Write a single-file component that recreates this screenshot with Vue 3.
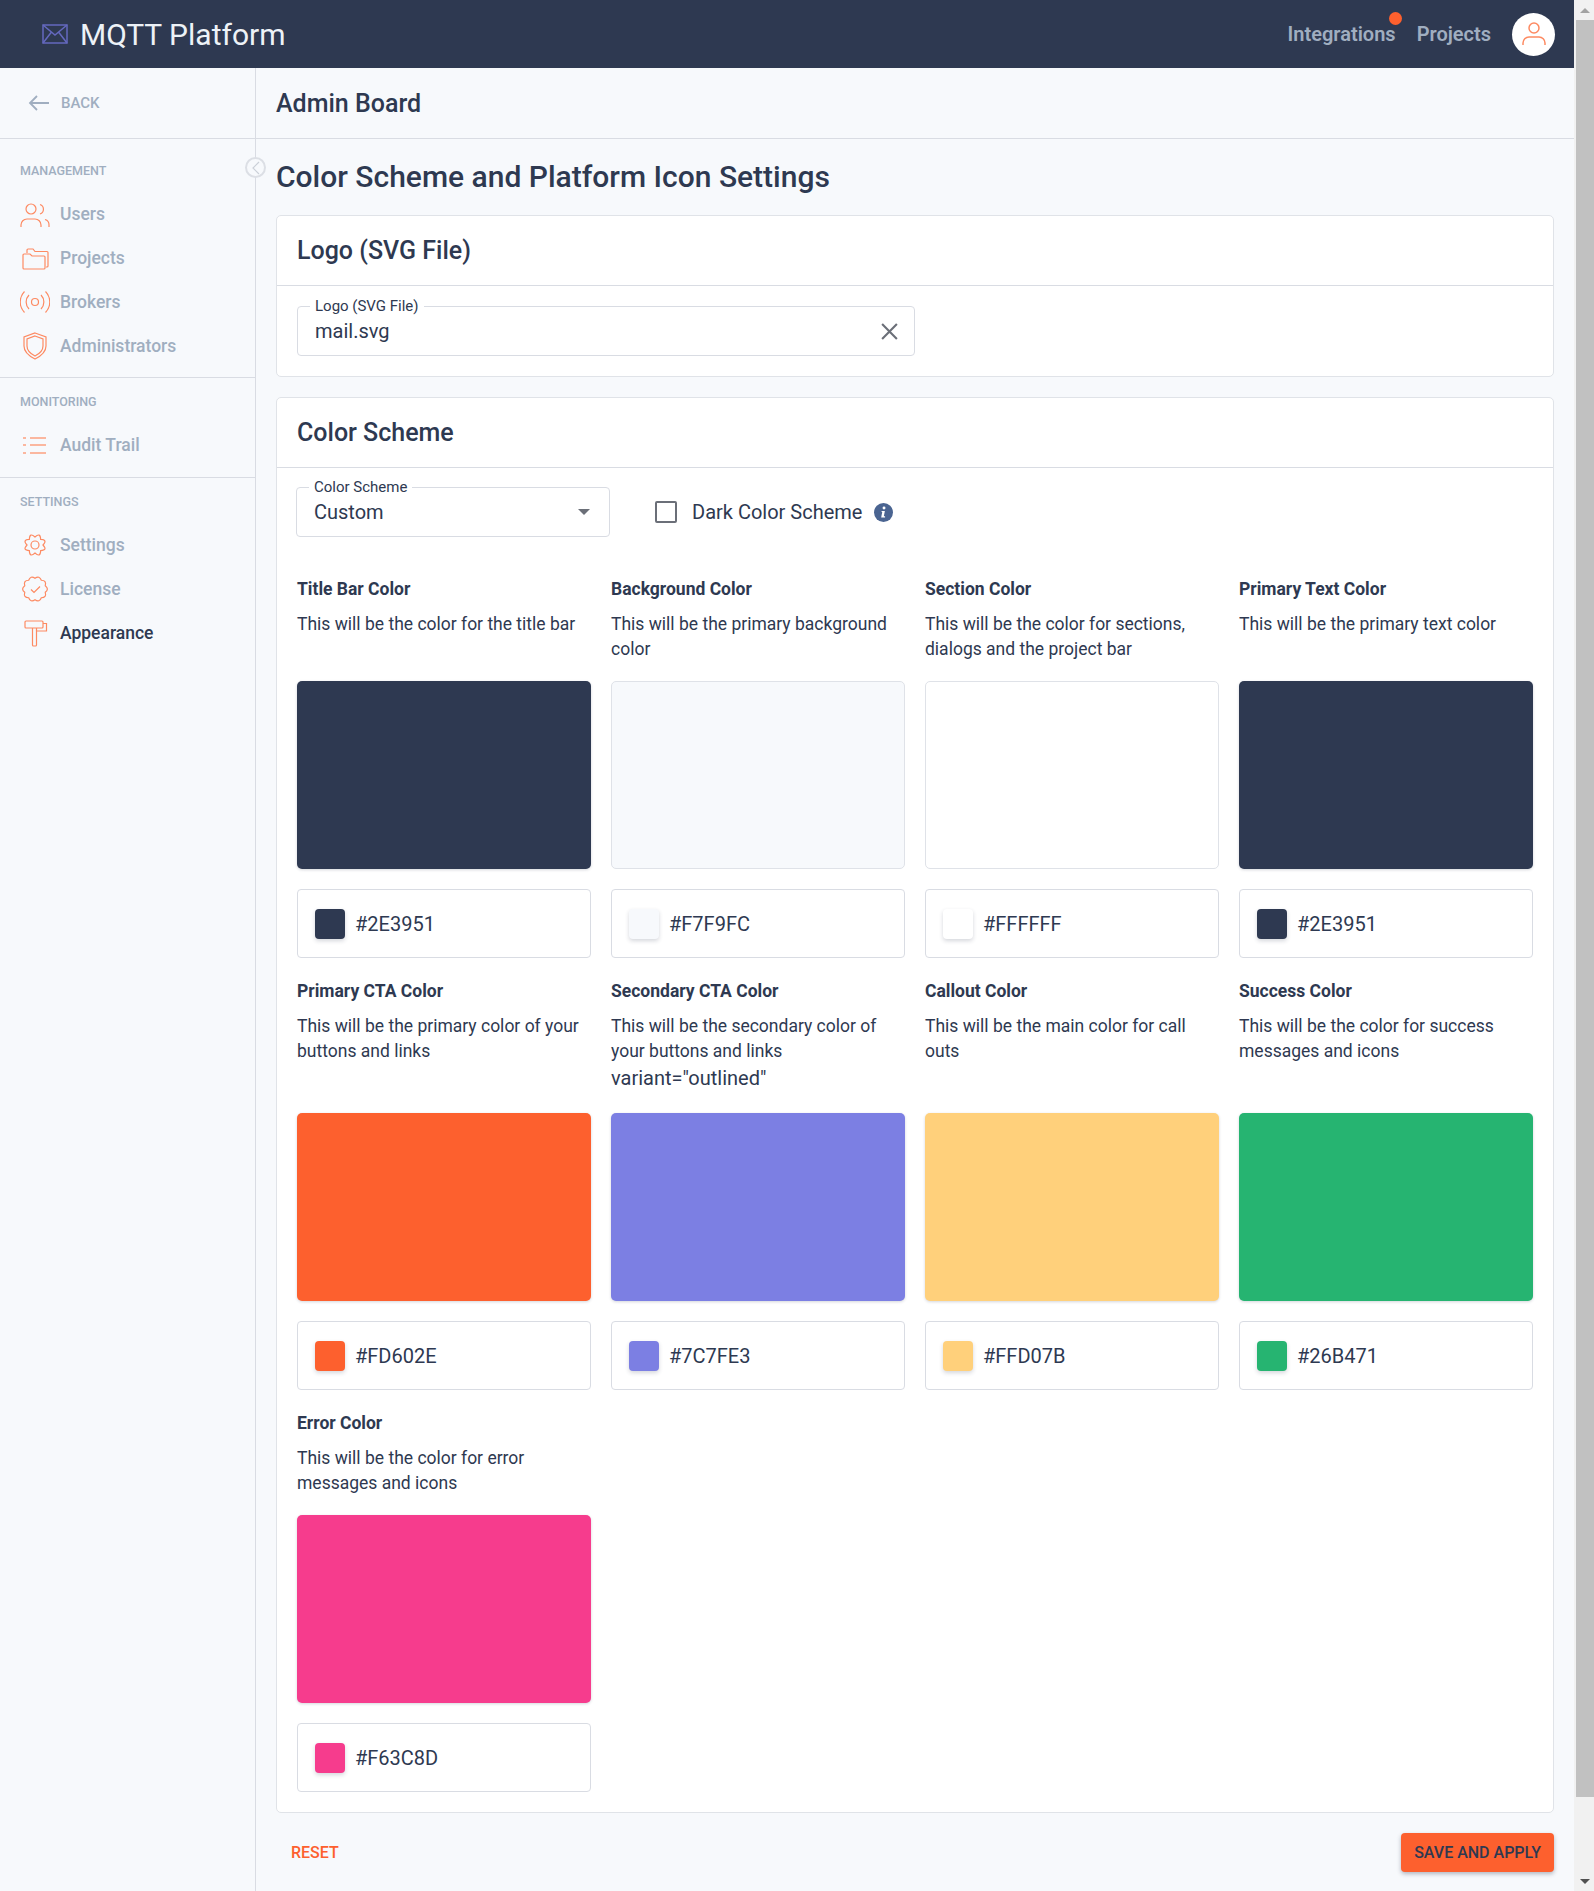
<template>
  <div class="page">
    <div class="window">
      <header class="topbar">
        <div class="brand">
          <svg class="logo" width="26" height="20" viewBox="0 0 26 20" fill="none" stroke="#6468BE" stroke-width="1.5">
            <rect x="1" y="1" width="24" height="18" />
            <path d="M1 1l12 10L25 1M1 19l8.500-11M25 19l-8.500-11" />
          </svg>
          <span>MQTT Platform</span>
        </div>
        <nav class="topnav">
          <span class="topnav-link with-dot">Integrations<i class="dot"></i></span>
          <span class="topnav-link">Projects</span>
          <span class="avatar">
            <svg width="26" height="28" viewBox="0 0 26 28" fill="none" stroke="#FD8A62" stroke-width="1.500">
              <circle cx="13" cy="8" r="5" />
              <path d="M2 25v-2a6 6 0 0 1 6-6h10a6 6 0 0 1 6 6v2" />
            </svg>
          </span>
        </nav>
      </header>

      <div class="body">
        <aside class="sidebar">
          <div class="back">
            <svg width="22" height="16" viewBox="0 0 22 16" fill="none" stroke="#A0AEC0" stroke-width="1.800">
              <path d="M21 8H2M9 1L2 8l7 7" />
            </svg>
            <span>BACK</span>
          </div>
          <section v-for="group in menu" :key="group.title" class="menu-group">
            <div class="menu-title">{{ group.title }}</div>
            <div
              v-for="item in group.items"
              :key="item.label"
              class="menu-item"
              :class="{ active: item.active }"
            >
              <svg class="menu-icon" width="30" height="30" viewBox="0 0 30 30" fill="none" stroke="#FD8A62" stroke-width="1.200">
                <path v-for="d in item.paths" :key="d" :d="d" />
                <circle v-for="c in item.circles || []" :key="c[0] + '-' + c[2]" :cx="c[0]" :cy="c[1]" :r="c[2]" />
              </svg>
              <span>{{ item.label }}</span>
            </div>
          </section>
          <span class="collapse">
            <svg width="10" height="14" viewBox="0 0 10 14" fill="none" stroke="#CBD0D8" stroke-width="1.200">
              <path d="M8 1L2 7l6 6" />
            </svg>
          </span>
        </aside>

        <main class="main">
          <div class="crumb">Admin Board</div>
          <div class="content">
            <h1>Color Scheme and Platform Icon Settings</h1>

            <section class="card">
              <h2>Logo (SVG File)</h2>
              <div class="card-body logo-body">
                <div class="field logo-field">
                  <label>Logo (SVG File)</label>
                  <span>mail.svg</span>
                  <svg width="19" height="19" viewBox="0 0 18 18" fill="none" stroke="#6B6F78" stroke-width="2">
                    <path d="M2 2l14 14M16 2L2 16" />
                  </svg>
                </div>
              </div>
            </section>

            <section class="card">
              <h2>Color Scheme</h2>
              <div class="card-body scheme-body">
                <div class="scheme-row">
                  <div class="field select-field">
                    <label>Color Scheme</label>
                    <span>Custom</span>
                    <i class="caret"></i>
                  </div>
                  <div class="dark-toggle">
                    <i class="checkbox"></i>
                    <span>Dark Color Scheme</span>
                    <svg width="19" height="19" viewBox="0 0 18 18">
                      <circle cx="9" cy="9" r="9" fill="#4A6491" />
                      <circle cx="9.500" cy="4.800" r="1.400" fill="#fff" />
                      <path d="M7.300 7.500h3l-1 5h1.200v1.200H6.800l1-5.100h-.7z" fill="#fff" />
                    </svg>
                  </div>
                </div>

                <div class="colors">
                  <div v-for="c in colors" :key="c.title" class="color">
                    <div class="color-title">{{ c.title }}</div>
                    <p class="color-desc">{{ c.desc }}</p>
                    <div v-if="c.extra" class="color-extra">{{ c.extra }}</div>
                    <div class="swatch" :class="{ light: c.light }" :style="{ background: c.hex }"></div>
                    <div class="hex">
                      <i class="chip" :style="{ background: c.hex }"></i>
                      <span>{{ c.hex }}</span>
                    </div>
                  </div>
                </div>
              </div>
            </section>

            <div class="actions">
              <button class="reset" type="button">RESET</button>
              <button class="save" type="button">SAVE AND APPLY</button>
            </div>
          </div>
        </main>
      </div>
    </div>

    <div class="scrollbar">
      <i class="arrow up"></i>
      <div class="thumb"></div>
      <i class="arrow down"></i>
    </div>
  </div>
</template>

<script setup>
// scalloped outline, used for the gear and the license badge
const wavy = (n, r1, r2, cx = 15, cy = 15) => {
  let d = ''
  for (let i = 0; i < n; i++) {
    const a0 = (i / n) * Math.PI * 2 - Math.PI / 2
    const a1 = ((i + 0.5) / n) * Math.PI * 2 - Math.PI / 2
    const a2 = ((i + 1) / n) * Math.PI * 2 - Math.PI / 2
    const p = (a, r) => `${(cx + Math.cos(a) * r).toFixed(2)} ${(cy + Math.sin(a) * r).toFixed(2)}`
    if (i === 0) d += `M${p(a0, r1)}`
    d += `Q${p(a1, r2)} ${p(a2, r1)}`
  }
  return d + 'z'
}

const menu = [
  {
    title: 'MANAGEMENT',
    items: [
      {
        label: 'Users',
        paths: ['M1 28v-2a6 6 0 0 1 6-6h8a6 6 0 0 1 6 6v2', 'M20 5.500a5 5 0 0 1 0 9.500', 'M25 20.500a5.500 5.500 0 0 1 4 5.500v2'],
        circles: [[11, 10, 5]]
      },
      {
        label: 'Projects',
        paths: [
          'M7 10V7a1 1 0 0 1 1-1h5l2 2.500h12a1 1 0 0 1 1 1V23a1 1 0 0 1-1 1h-1',
          'M3 12a1 1 0 0 1 1-1h6l2 2h12a1 1 0 0 1 1 1v11a1 1 0 0 1-1 1H4a1 1 0 0 1-1-1z'
        ]
      },
      {
        label: 'Brokers',
        paths: ['M9 8a10 10 0 0 0 0 14', 'M21 8a10 10 0 0 1 0 14', 'M4.500 4.500a15 15 0 0 0 0 21', 'M25.500 4.500a15 15 0 0 1 0 21'],
        circles: [[15, 15, 3.500]]
      },
      {
        label: 'Administrators',
        paths: ['M15 2l11 4v9c0 6-5 10-11 13C9 25 4 21 4 15V6z', 'M15 5l8 3v7c0 5-4 8-8 10-4-2-8-5-8-10V8z']
      }
    ]
  },
  {
    title: 'MONITORING',
    items: [
      {
        label: 'Audit Trail',
        paths: ['M3 8h3', 'M3 15h3', 'M3 23h3', 'M10 8h16', 'M10 15h16', 'M10 23h16']
      }
    ]
  },
  {
    title: 'SETTINGS',
    items: [
      { label: 'Settings', paths: [wavy(8, 8, 14)], circles: [[15, 15, 4]] },
      { label: 'License', paths: [wavy(10, 10.800, 14.500), 'M11 15.500l3 3 6-6'] },
      {
        label: 'Appearance',
        active: true,
        paths: [
          'M6 3h16a1 1 0 0 1 1 1v5a1 1 0 0 1-1 1H6a1 1 0 0 1-1-1V4a1 1 0 0 1 1-1z',
          'M23 5.500h3.500V13H16.500v14a1 1 0 0 1-1 1h-2a1 1 0 0 1-1-1V10',
          'M16.500 10v3'
        ]
      }
    ]
  }
]

const colors = [
  { title: 'Title Bar Color', desc: 'This will be the color for the title bar', hex: '#2E3951' },
  { title: 'Background Color', desc: 'This will be the primary background color', hex: '#F7F9FC', light: true },
  { title: 'Section Color', desc: 'This will be the color for sections, dialogs and the project bar', hex: '#FFFFFF', light: true },
  { title: 'Primary Text Color', desc: 'This will be the primary text color', hex: '#2E3951' },
  { title: 'Primary CTA Color', desc: 'This will be the primary color of your buttons and links', hex: '#FD602E' },
  { title: 'Secondary CTA Color', desc: 'This will be the secondary color of your buttons and links', extra: 'variant="outlined"', hex: '#7C7FE3' },
  { title: 'Callout Color', desc: 'This will be the main color for call outs', hex: '#FFD07B' },
  { title: 'Success Color', desc: 'This will be the color for success messages and icons', hex: '#26B471' },
  { title: 'Error Color', desc: 'This will be the color for error messages and icons', hex: '#F63C8D' }
]
</script>

<style scoped>
.page {
  display: flex;
  width: 1594px;
  height: 1891px;
  overflow: hidden;
  font-family: Roboto, "Liberation Sans", sans-serif;
  color: #2e3951;
  background: #f7f9fc;
}

.window {
  flex: 1;
  min-width: 0;
  display: flex;
  flex-direction: column;
}

.topbar {
  height: 68px;
  flex-shrink: 0;
  display: flex;
  align-items: center;
  justify-content: space-between;
  padding: 0 19px 0 42px;
  background: #2e3951;
}

.brand {
  display: flex;
  align-items: center;
  gap: 12px;
  font-size: 30px;
  color: #edf2f7;
}

.topnav {
  display: flex;
  align-items: center;
  gap: 21px;
  font-size: 20px;
  font-weight: 600;
  color: #a0aec0;
}

.topnav-link {
  position: relative;
}

.dot {
  position: absolute;
  top: -10px;
  right: -6px;
  width: 13px;
  height: 13px;
  border-radius: 50%;
  background: #fd602e;
}

.avatar {
  display: flex;
  align-items: center;
  justify-content: center;
  width: 43px;
  height: 43px;
  border-radius: 50%;
  background: #fff;
}

.body {
  flex: 1;
  display: flex;
  min-height: 0;
}

.sidebar {
  position: relative;
  width: 256px;
  box-sizing: border-box;
  flex-shrink: 0;
  border-right: 1px solid #d9dce3;
}

.back {
  display: flex;
  align-items: center;
  gap: 11px;
  box-sizing: border-box;
  height: 71px;
  padding-left: 28px;
  border-bottom: 1px solid #d9dce3;
  font-size: 15px;
  font-weight: 500;
  color: #a0aec0;
}

.menu-group {
  padding: 12px 0 10px;
  border-bottom: 1px solid #d9dce3;
}

.menu-group:first-of-type {
  padding-top: 20px;
  padding-bottom: 9px;
}

.menu-group:last-of-type {
  border-bottom: 0;
}

.menu-title {
  height: 21px;
  margin-bottom: 12px;
  padding-left: 20px;
  font-size: 12.500px;
  line-height: 23px;
  font-weight: 500;
  color: #a0aec0;
}

.menu-item {
  display: flex;
  align-items: center;
  gap: 10px;
  height: 44px;
  padding-left: 20px;
  font-size: 17.500px;
  font-weight: 500;
  color: #a0aec0;
}

.menu-item.active {
  color: #2e3951;
}

.collapse {
  position: absolute;
  top: 89px;
  right: -11px;
  display: flex;
  align-items: center;
  justify-content: center;
  width: 21px;
  height: 21px;
  box-sizing: border-box;
  border: 2px solid #dcdfe5;
  border-radius: 50%;
  background: #f7f9fc;
}

.main {
  flex: 1;
  min-width: 0;
  display: flex;
  flex-direction: column;
}

.crumb {
  height: 71px;
  flex-shrink: 0;
  box-sizing: border-box;
  padding-left: 20px;
  border-bottom: 1px solid #d9dce3;
  font-size: 25px;
  font-weight: 500;
  line-height: 72px;
}

.content {
  padding: 0 20px;
}

h1 {
  margin: 0;
  height: 76px;
  font-size: 30px;
  font-weight: 500;
  line-height: 76px;
}

h2 {
  margin: 0;
  box-sizing: border-box;
  height: 70px;
  padding-left: 20px;
  border-bottom: 1px solid #d9dce3;
  font-size: 25px;
  font-weight: 500;
  line-height: 70px;
}

.card {
  margin-bottom: 20px;
  border: 1px solid #e0e3e8;
  border-radius: 5px;
  background: #fff;
}

.card-body {
  padding: 20px;
}

.field {
  position: relative;
  display: flex;
  align-items: center;
  justify-content: space-between;
  box-sizing: border-box;
  height: 50px;
  padding: 0 15px 0 17px;
  border: 1px solid #d9dce3;
  border-radius: 4px;
  font-size: 20px;
}

.field label {
  position: absolute;
  top: -8px;
  left: 12px;
  padding: 0 5px;
  background: #fff;
  font-size: 15px;
  line-height: 15px;
}

.logo-field {
  width: 618px;
}

.scheme-row {
  display: flex;
  align-items: center;
  margin-left: -1px;
  margin-top: -1px;
  gap: 45px;
}

.select-field {
  width: 314px;
}

.caret {
  width: 0;
  height: 0;
  margin-right: 4px;
  border-left: 6px solid transparent;
  border-right: 6px solid transparent;
  border-top: 6px solid #6b6f78;
}

.dark-toggle {
  display: flex;
  align-items: center;
  font-size: 20px;
}

.checkbox {
  width: 18px;
  height: 18px;
  margin-right: 15px;
  border: 2px solid #6b6f78;
  border-radius: 2px;
}

.dark-toggle svg {
  margin-left: 12px;
}

.colors {
  display: grid;
  grid-template-columns: repeat(4, 294px);
  gap: 23px 20px;
  margin-top: 42px;
}

.color {
  display: flex;
  flex-direction: column;
}

.color-title {
  font-size: 17.500px;
  font-weight: 700;
  line-height: 20px;
}

.color-desc {
  margin: 13px 0 19px;
  font-size: 17.500px;
  line-height: 25px;
}

.color-desc:has(+ .color-extra) {
  margin-bottom: 0;
}

.color-extra {
  margin-bottom: 21px;
  font-size: 20px;
  line-height: 28px;
}

.swatch {
  height: 187.500px;
  flex-shrink: 0;
  margin-top: auto;
  box-sizing: border-box;
  border-radius: 5px;
  box-shadow: 0 1px 3px rgba(46, 57, 81, 0.2);
}

.swatch.light {
  border: 1px solid #dfe2e8;
  box-shadow: none;
}

.hex {
  display: flex;
  align-items: center;
  gap: 10px;
  box-sizing: border-box;
  height: 69px;
  margin-top: 20.500px;
  padding-left: 17px;
  border: 1px solid #d9dce3;
  border-radius: 4px;
  font-size: 20px;
}

.chip {
  width: 30px;
  height: 30px;
  border-radius: 4px;
  box-shadow: 0 2px 4px rgba(46, 57, 81, 0.2);
}

.actions {
  display: flex;
  align-items: center;
  justify-content: space-between;
}

button {
  border: 0;
  font-family: inherit;
  font-size: 16px;
  font-weight: 500;
  cursor: pointer;
}

.reset {
  padding: 0 15px;
  background: transparent;
  color: #fd602e;
}

.save {
  height: 39px;
  padding: 0 13px;
  border-radius: 4px;
  background: #fd602e;
  color: #2e3951;
  box-shadow: 0 2px 4px rgba(46, 57, 81, 0.35);
}

.scrollbar {
  width: 20px;
  flex-shrink: 0;
  display: flex;
  flex-direction: column;
  align-items: flex-end;
  background: #f1f1f1;
}

.thumb {
  flex: 1;
  width: 18px;
  margin: 0 0 75px;
  background: #c1c1c1;
}

.arrow {
  width: 0;
  height: 0;
  margin: 7px 4px;
  border-left: 5px solid transparent;
  border-right: 5px solid transparent;
}

.arrow.up {
  margin-top: 8px;
  border-bottom: 5px solid #a3a3a3;
}

.arrow.down {
  border-top: 5px solid #505050;
}
</style>
